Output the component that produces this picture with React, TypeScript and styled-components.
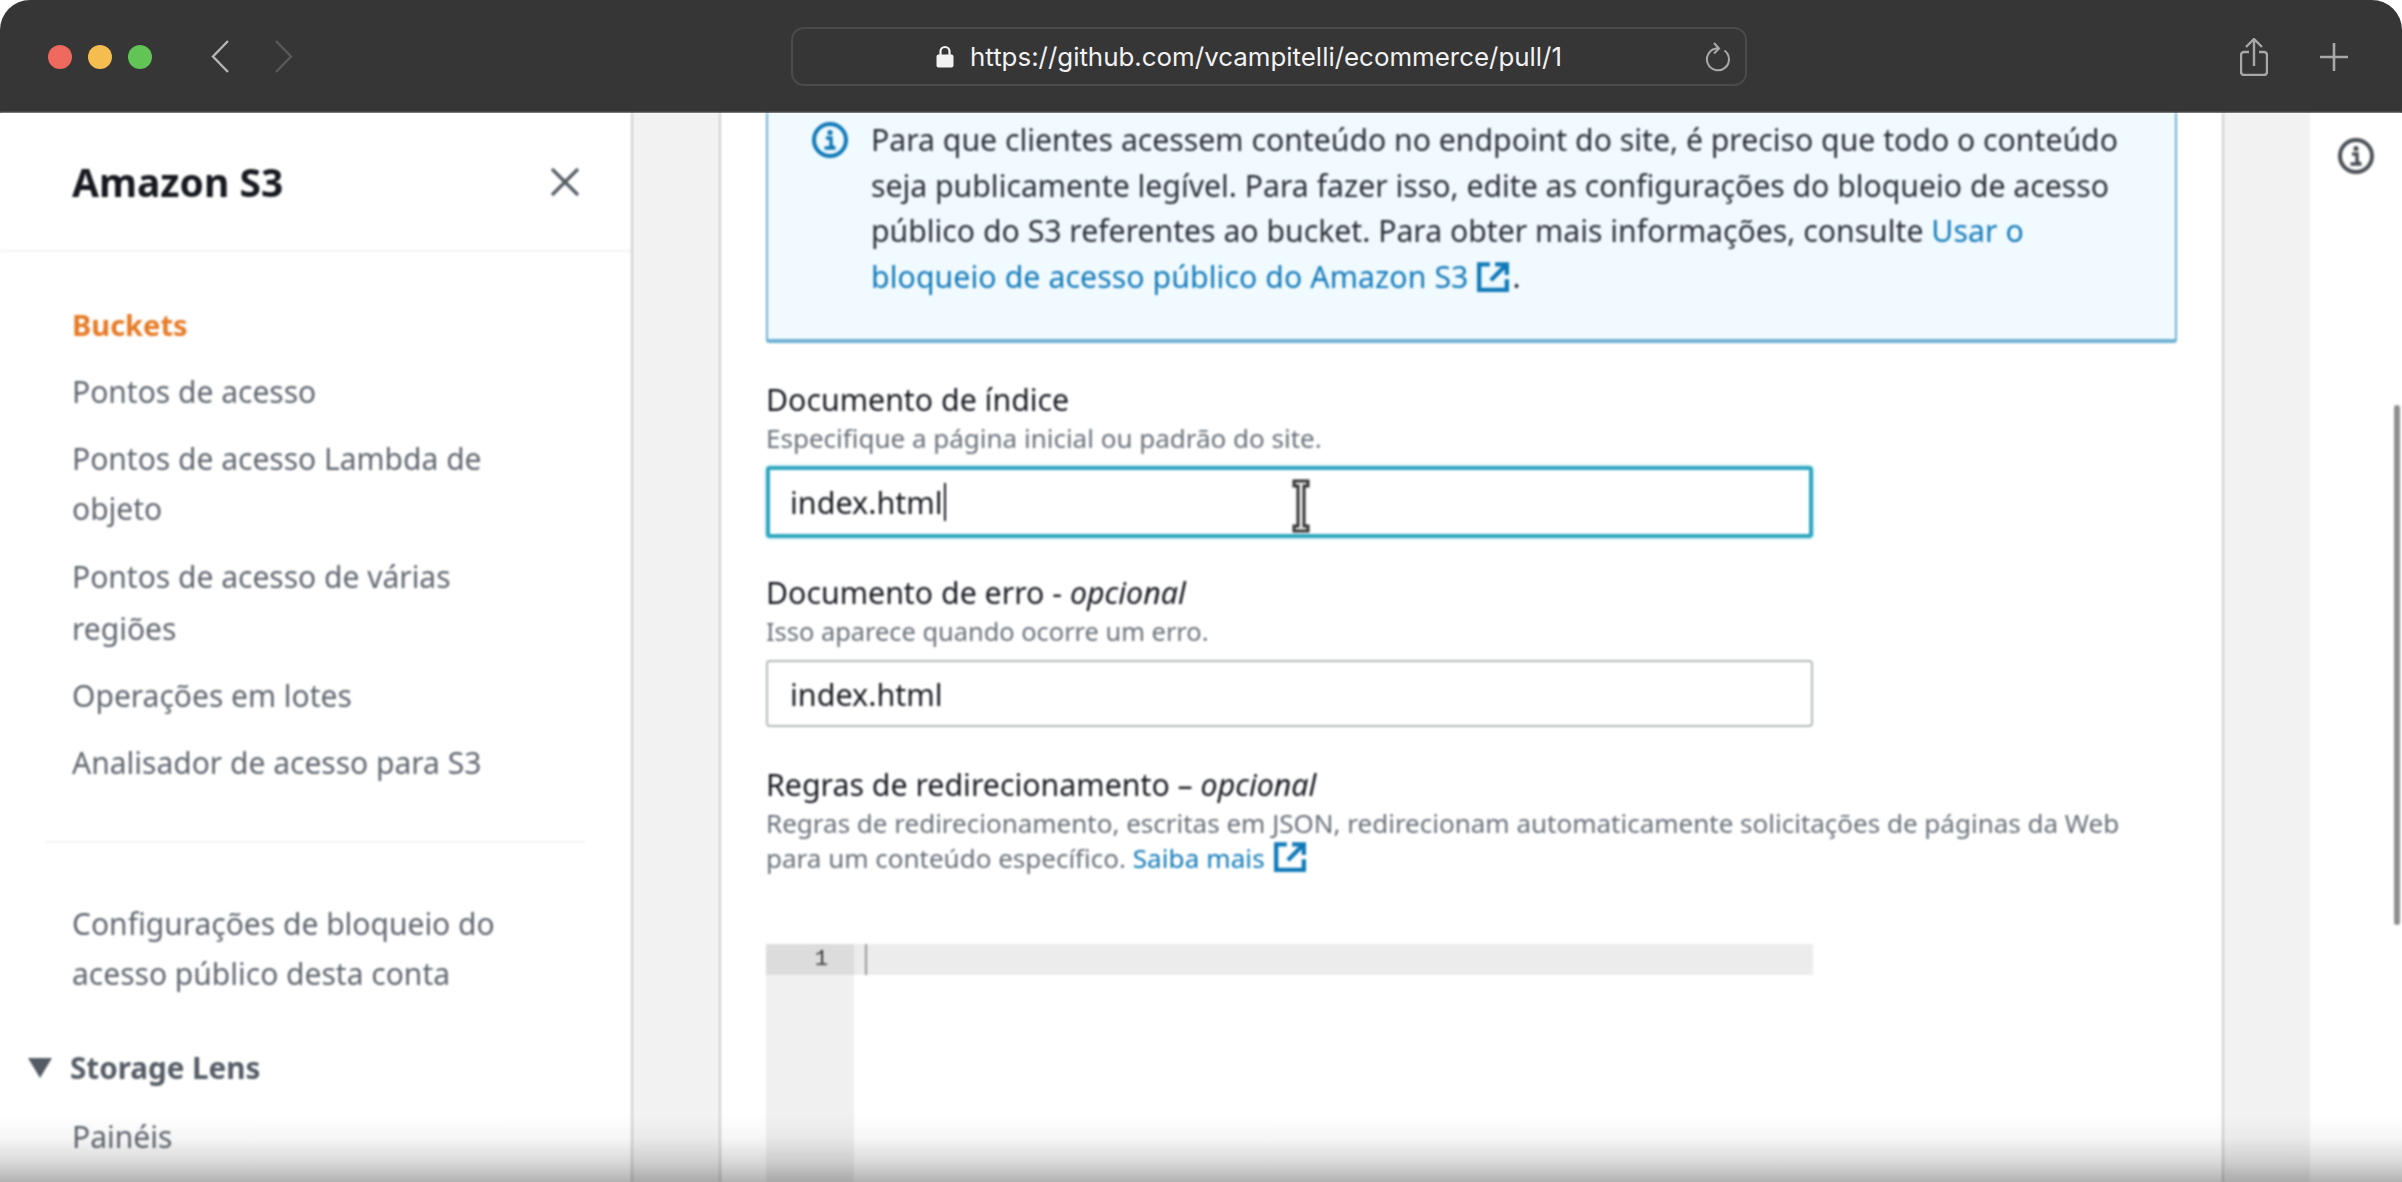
import {FC, ReactNode} from "react";
import styled, {createGlobalStyle} from "styled-components";

const GlobalStyle = createGlobalStyle`
  html, body {
    margin: 0;
    padding: 0;
    background: #fff;
  }
  * {
    box-sizing: border-box;
  }
`;

const Page = styled.div`
  position: relative;
  width: 2402px;
  height: 1182px;
  overflow: hidden;
  display: flex;
  flex-direction: column;
  background: #fff;
  font-family: "Noto Sans", "Open Sans", sans-serif;
`;

const TopBar = styled.header`
  height: 113px;
  flex: none;
  display: flex;
  align-items: center;
  padding-left: 48px;
  background: #363636;
  border-radius: 30px 30px 0 0;
`;

const LeftControls = styled.div`
  width: 743px;
  flex: none;
  display: flex;
  align-items: center;
`;

const Dot = styled.span<{$color: string}>`
  width: 24px;
  height: 24px;
  margin-right: 16px;
  border-radius: 50%;
  background: ${(props) => props.$color};
`;

const NavButtons = styled.div`
  display: flex;
  gap: 46px;
  margin-left: 43px;
`;

const UrlBar = styled.div`
  width: 956px;
  height: 59px;
  flex: none;
  display: flex;
  align-items: center;
  padding: 0 15px 0 143px;
  border: 2px solid #4b4b4b;
  border-radius: 13px;
`;

const UrlText = styled.span`
  margin-left: 16px;
  color: #f2f2f2;
  font-family: Inter, sans-serif;
  font-size: 25.9px;
  white-space: nowrap;
`;

const ReloadSlot = styled.div`
  margin-left: auto;
  display: flex;
`;

const RightControls = styled.div`
  display: flex;
  align-items: center;
  gap: 52px;
  margin-left: 493px;
`;

const Body = styled.div`
  flex: 1;
  min-height: 0;
  display: flex;
  filter: blur(0.9px);
`;

const Sidebar = styled.nav`
  width: 633px;
  flex: none;
  background: #fff;
  border-right: 2px solid #d0d0d0;
`;

const SidebarHeader = styled.div`
  height: 139px;
  display: flex;
  align-items: center;
  justify-content: space-between;
  padding: 0 51px 0 72px;
  border-bottom: 2px solid #f2f3f3;
`;

const SidebarTitle = styled.h1`
  margin: 0;
  color: #16191f;
  font-size: 39px;
  font-weight: 700;
`;

const NavList = styled.div`
  display: flex;
  flex-direction: column;
  padding: 48px 120px 0 72px;
`;

const NavItem = styled.a<{$active?: boolean; $tall?: boolean}>`
  margin-bottom: 17px;
  color: ${(props) => (props.$active ? "#e67a25" : "#5f666e")};
  font-size: ${(props) => (props.$active ? 29 : 30)}px;
  font-weight: ${(props) => (props.$active ? 700 : 400)};
  line-height: ${(props) => (props.$tall ? 51.5 : 50)}px;
`;

const NavDivider = styled.hr`
  height: 2px;
  margin: 36px 0 56px -27px;
  width: 540px;
  border: 0;
  background: #f2f3f3;
`;

const NavSection = styled.div`
  display: flex;
  align-items: center;
  gap: 18px;
  margin: 27px 0 19px -44px;
  color: #545b64;
  font-size: 29.6px;
  font-weight: 700;
  line-height: 50px;
`;

const Gutter = styled.div<{$width: number}>`
  width: ${(props) => props.$width}px;
  flex: none;
  background: #f2f2f2;
`;

const Panel = styled.main`
  width: 1505px;
  flex: none;
  display: flex;
  flex-direction: column;
  padding-left: 45px;
  background: #fff;
  border-left: 2px solid #d0d0d0;
  border-right: 2px solid #d0d0d0;
`;

const InfoBox = styled.section`
  width: 1411px;
  display: flex;
  gap: 22px;
  padding: 4px 0 40px 43px;
  background: #f1faff;
  border: solid #6fb1d3;
  border-width: 0 2px 4px;
  border-radius: 0 0 3px 3px;
  color: #2a2f36;
  font-size: 30.2px;
  line-height: 45.5px;
`;

const InfoIconSlot = styled.div`
  flex: none;
  display: flex;
  height: 45px;
  align-items: center;
`;

const Link = styled.a`
  color: #0f79b8;
  letter-spacing: 0.1px;
`;

const ExternalIcon = styled.svg`
  width: 34px;
  height: 32px;
  margin: 0 2px 0 8px;
  vertical-align: -5px;
`;

const FieldBlock = styled.div<{$top: number}>`
  margin-top: ${(props) => props.$top}px;
`;

const Label = styled.div`
  color: #16191f;
  font-size: 30.3px;
  line-height: 40px;
`;

const Hint = styled.div<{$size?: number}>`
  margin-top: 1px;
  color: #687078;
  font-size: ${(props) => props.$size ?? 26}px;
  line-height: 35px;
`;

const Field = styled.div<{$focused?: boolean}>`
  position: relative;
  width: 1047px;
  height: ${(props) => (props.$focused ? 72 : 67)}px;
  margin-top: ${(props) => (props.$focused ? 10 : 11)}px;
  display: flex;
  align-items: center;
  padding-left: ${(props) => (props.$focused ? 20 : 22)}px;
  background: #fff;
  border: ${(props) => (props.$focused ? "4px solid #2fa6bf" : "2px solid #b4b8bb")};
  border-radius: 4px;
  box-shadow: ${(props) => (props.$focused ? "0 0 3px #7fd3e6" : "none")};
  color: #16191f;
  font-size: 30.5px;
`;

const Caret = styled.span`
  width: 2px;
  height: 38px;
  margin-left: 1px;
  background: #16191f;
`;

const IBeam = styled.svg`
  position: absolute;
  left: 521px;
  top: 9px;
  width: 20px;
  height: 54px;
`;

const Editor = styled.div`
  flex: 1;
  width: 1047px;
  margin-top: 68px;
  display: flex;
`;

const LineNumbers = styled.div`
  width: 88px;
  flex: none;
  background: #f0f0f0;
`;

const ActiveNumber = styled.div`
  height: 31px;
  padding-right: 26px;
  background: #dcdcdc;
  color: #333;
  font-family: "Liberation Mono", monospace;
  font-size: 22px;
  line-height: 31px;
  text-align: right;
`;

const EditorBody = styled.div`
  flex: 1;
`;

const ActiveLine = styled.div`
  height: 31px;
  padding-left: 11px;
  background: #ececec;
`;

const EditorCaret = styled.div`
  width: 2px;
  height: 100%;
  background: #9a9a9a;
`;

const RightRail = styled.aside`
  flex: 1;
  position: relative;
  display: flex;
  justify-content: center;
  padding: 24px 0 0 0;
  background: #fff;
`;

const Scrollbar = styled.div`
  position: absolute;
  top: 292px;
  right: 2px;
  width: 6px;
  height: 520px;
  border-radius: 3px;
  background: #8f8f8f;
`;

const BottomFade = styled.div`
  position: absolute;
  left: 0;
  right: 0;
  bottom: 0;
  height: 66px;
  background: linear-gradient(
    rgba(0, 0, 0, 0),
    rgba(0, 0, 0, 0.04) 35%,
    rgba(0, 0, 0, 0.15) 70%,
    rgba(0, 0, 0, 0.3)
  );
  pointer-events: none;
`;

const InfoIcon: FC<{color: string}> = ({color}) => (
  <svg width="38" height="38" viewBox="0 0 38 38">
    <circle cx="19" cy="19" r="16" fill="none" stroke={color} strokeWidth="4" />
    <circle cx="19" cy="11.5" r="2.6" fill={color} />
    <path d="M15 17h5v9h3M13.5 27h11" fill="none" stroke={color} strokeWidth="3.4" />
  </svg>
);

const External: FC = () => (
  <ExternalIcon viewBox="0 0 32 30">
    <path
      d="M13 3H3v24h26V17M18 3h11v10M28 4 14 18"
      fill="none"
      stroke="#0f79b8"
      strokeWidth="4"
    />
  </ExternalIcon>
);

const Item: FC<{children: ReactNode; active?: boolean; tall?: boolean}> = ({children, active, tall}) => (
  <NavItem $active={active} $tall={tall}>{children}</NavItem>
);

const App: FC = () => {
  return (
    <Page>
      <GlobalStyle />
      <TopBar>
        <LeftControls>
          <Dot $color="#ee6a5f" />
          <Dot $color="#f5bd4f" />
          <Dot $color="#61c454" />
          <NavButtons>
            <svg width="18" height="33" viewBox="0 0 18 33">
              <path d="M17 1 2 16.5 17 32" fill="none" stroke="#b5b5b5" strokeWidth="2.4" />
            </svg>
            <svg width="18" height="33" viewBox="0 0 18 33">
              <path d="M1 1 16 16.5 1 32" fill="none" stroke="#595959" strokeWidth="2.4" />
            </svg>
          </NavButtons>
        </LeftControls>
        <UrlBar>
          <svg width="18" height="23" viewBox="0 0 18 23">
            <path d="M4.5 10V6.5a4.5 4.5 0 0 1 9 0V10" fill="none" stroke="#f2f2f2" strokeWidth="2.2" />
            <rect x="0.5" y="9.5" width="17" height="13" rx="2" fill="#f2f2f2" />
          </svg>
          <UrlText>https://github.com/vcampitelli/ecommerce/pull/1</UrlText>
          <ReloadSlot>
            <svg width="26" height="30" viewBox="0 0 26 30">
              <path
                d="M20.5 8.5A11 11 0 1 1 12 6.5h2M10 1l5 5.5-5 5"
                fill="none"
                stroke="#a8a8a8"
                strokeWidth="2"
              />
            </svg>
          </ReloadSlot>
        </UrlBar>
        <RightControls>
          <svg width="28" height="38" viewBox="0 0 28 38">
            <path
              d="M9 14H4a3 3 0 0 0-3 3v17a3 3 0 0 0 3 3h20a3 3 0 0 0 3-3V17a3 3 0 0 0-3-3h-5M14 2v26M6 9l8-8 8 8"
              fill="none"
              stroke="#a8a8a8"
              strokeWidth="2.4"
            />
          </svg>
          <svg width="28" height="28" viewBox="0 0 28 28">
            <path d="M14 0v28M0 14h28" stroke="#a8a8a8" strokeWidth="2.6" />
          </svg>
        </RightControls>
      </TopBar>

      <Body>
        <Sidebar>
          <SidebarHeader>
            <SidebarTitle>Amazon S3</SidebarTitle>
            <svg width="30" height="30" viewBox="0 0 30 30">
              <path d="M2 2l26 26M28 2 2 28" stroke="#545b64" strokeWidth="3.2" />
            </svg>
          </SidebarHeader>
          <NavList>
            <Item active>Buckets</Item>
            <Item>Pontos de acesso</Item>
            <Item>Pontos de acesso Lambda de objeto</Item>
            <Item tall>Pontos de acesso de várias regiões</Item>
            <Item>Operações em lotes</Item>
            <Item>Analisador de acesso para S3</Item>
            <NavDivider />
            <Item>Configurações de bloqueio do acesso público desta conta</Item>
            <NavSection>
              <svg width="24" height="20" viewBox="0 0 24 20">
                <path d="M0 0h24L12 20z" fill="#545b64" />
              </svg>
              Storage Lens
            </NavSection>
            <Item>Painéis</Item>
          </NavList>
        </Sidebar>

        <Gutter $width={86} />

        <Panel>
          <InfoBox>
            <InfoIconSlot>
              <InfoIcon color="#0f79b8" />
            </InfoIconSlot>
            <div>
              Para que clientes acessem conteúdo no endpoint do site, é preciso que todo o conteúdo<br />
              seja publicamente legível. Para fazer isso, edite as configurações do bloqueio de acesso<br />
              público do S3 referentes ao bucket. Para obter mais informações, consulte <Link>Usar o<br />
              bloqueio de acesso público do Amazon S3<External /></Link>.
            </div>
          </InfoBox>

          <FieldBlock $top={37}>
            <Label>Documento de índice</Label>
            <Hint>Especifique a página inicial ou padrão do site.</Hint>
            <Field $focused>
              index.html
              <Caret />
              <IBeam viewBox="0 0 20 54">
                <path
                  d="M3 2h14v5h-4v40h4v5H3v-5h4V7H3z"
                  fill="#f4f4f4"
                  stroke="#333"
                  strokeWidth="3"
                />
              </IBeam>
            </Field>
          </FieldBlock>

          <FieldBlock $top={35}>
            <Label>Documento de erro - <em>opcional</em></Label>
            <Hint $size={25.4}>Isso aparece quando ocorre um erro.</Hint>
            <Field>index.html</Field>
          </FieldBlock>

          <FieldBlock $top={38}>
            <Label>Regras de redirecionamento – <em>opcional</em></Label>
            <Hint>
              Regras de redirecionamento, escritas em JSON, redirecionam automaticamente solicitações de páginas da Web<br />
              para um conteúdo específico. <Link>Saiba mais<External /></Link>
            </Hint>
          </FieldBlock>

          <Editor>
            <LineNumbers>
              <ActiveNumber>1</ActiveNumber>
            </LineNumbers>
            <EditorBody>
              <ActiveLine>
                <EditorCaret />
              </ActiveLine>
            </EditorBody>
          </Editor>
        </Panel>

        <Gutter $width={86} />

        <RightRail>
          <InfoIcon color="#4a4f55" />
          <Scrollbar />
        </RightRail>
      </Body>

      <BottomFade />
    </Page>
  );
};

export default App;
